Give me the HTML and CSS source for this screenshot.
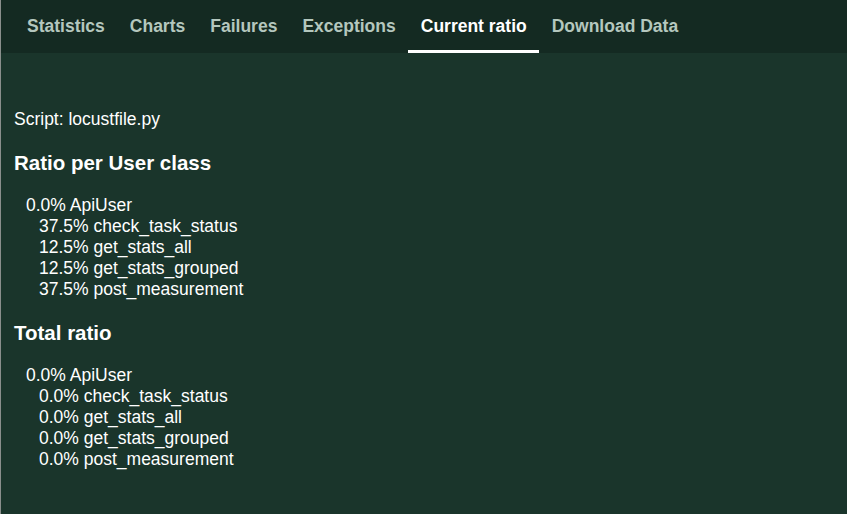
FILE: index.html
```html
<!DOCTYPE html>
<html>
<head>
<meta charset="utf-8">
<link rel="stylesheet" href="styles.css">
</head>
<body>
<div class="app">
  <nav class="tabs">
    <div class="tab">Statistics</div>
    <div class="tab">Charts</div>
    <div class="tab">Failures</div>
    <div class="tab">Exceptions</div>
    <div class="tab active">Current ratio</div>
    <div class="tab">Download Data</div>
  </nav>
  <main class="content">
    <p class="script">Script: locustfile.py</p>
    <h3 class="heading">Ratio per User class</h3>
    <ul class="tree">
      <li>0.0% ApiUser
        <ul class="tree sub">
          <li>37.5% check_task_status</li>
          <li>12.5% get_stats_all</li>
          <li>12.5% get_stats_grouped</li>
          <li>37.5% post_measurement</li>
        </ul>
      </li>
    </ul>
    <h3 class="heading">Total ratio</h3>
    <ul class="tree">
      <li>0.0% ApiUser
        <ul class="tree sub">
          <li>0.0% check_task_status</li>
          <li>0.0% get_stats_all</li>
          <li>0.0% get_stats_grouped</li>
          <li>0.0% post_measurement</li>
        </ul>
      </li>
    </ul>
  </main>
</div>
</body>
</html>
```
FILE: styles.css
```css
html, body {
  margin: 0;
  padding: 0;
  height: 100%;
}
body {
  font-family: "Liberation Sans", Arial, sans-serif;
  font-size: 17.5px;
  color: #ffffff;
  background: #1a352b;
}
.app {
  min-height: 100%;
  border-left: 1px solid #8a8f8c;
  box-sizing: border-box;
  display: flex;
  flex-direction: column;
}
.tabs {
  display: flex;
  height: 53px;
  padding-left: 13.5px;
  background: #142a22;
}
.tab {
  padding: 2px 12.5px 0;
  font-weight: bold;
  font-size: 17.5px;
  line-height: 48px;
  color: #b4c7be;
  border-bottom: 3px solid transparent;
}
.tab.active {
  color: #ffffff;
  border-bottom-color: #ffffff;
}
.content {
  flex: 1;
  padding: 56px 13px 20px;
  line-height: 21px;
}
.script {
  margin: 0 0 21px;
}
.heading {
  margin: 0 0 21px;
  font-size: 20.5px;
  line-height: 23px;
  font-weight: bold;
}
.tree {
  list-style: none;
  margin: 0 0 21px;
  padding-left: 12px;
}
.tree.sub {
  margin: 0;
  padding-left: 13px;
}
```
